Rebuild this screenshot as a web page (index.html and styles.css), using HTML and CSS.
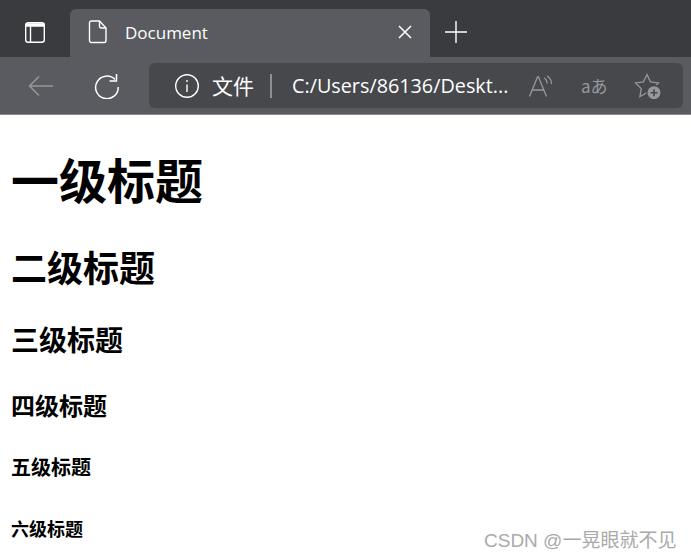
FILE: index.html
```html
<!DOCTYPE html>
<html lang="zh">
<head>
<meta charset="utf-8">
<title>Document</title>
<link rel="stylesheet" href="styles.css">
</head>
<body>
<header class="browser">
  <div class="tabstrip">
    <div class="tab-actions">
      <svg class="icon" width="24" height="24" viewBox="0 0 24 24" fill="none" stroke="#fff" stroke-width="1.400"><rect x="2.700" y="1.700" width="18.600" height="19.600" rx="2.500"/><path d="M2.500 4h19" stroke-width="3.500"/><path d="M7.500 5v16"/></svg>
    </div>
    <div class="tab">
      <svg class="icon" width="20" height="24" viewBox="0 0 20 24" fill="none" stroke="#fff" stroke-width="1.400"><path d="M3.500 1h8l6.500 7v12.500a2 2 0 0 1-2 2H3.500a2 2 0 0 1-2-2V3a2 2 0 0 1 2-2z"/><path d="M11.500 1v5a2 2 0 0 0 2 2H18"/></svg>
      <span class="tab-title">Document</span>
      <svg class="tab-close" width="14" height="14" viewBox="0 0 14 14" stroke="#fff" stroke-width="1.500"><path d="M1 1l12 12M13 1L1 13"/></svg>
    </div>
    <svg class="new-tab" width="22" height="22" viewBox="0 0 22 22" stroke="#fff" stroke-width="1.400"><path d="M11 0v22M0 11h22"/></svg>
  </div>
  <div class="toolbar">
    <svg class="back" width="26" height="22" viewBox="0 0 26 22" fill="none" stroke="#97989b" stroke-width="1.500"><path d="M25 11H1.500M11 1.500L1.500 11l9.500 9.500"/></svg>
    <svg class="reload" width="26" height="26" viewBox="0 0 26 26" fill="none" stroke="#fff" stroke-width="1.500"><path d="M21 6.500A11.300 11.300 0 1 0 24.200 14"/><path d="M22.500 1v7H15.500"/></svg>
    <div class="address">
      <svg class="info" width="26" height="26" viewBox="0 0 26 26" fill="none" stroke="#fff" stroke-width="1.400"><circle cx="13" cy="13" r="11.300"/><path d="M13 11.500v7.500M13 7v2"/></svg>
      <span class="scheme">文件</span>
      <span class="divider"></span>
      <span class="url">C:/Users/86136/Deskt...</span>
      <svg class="act act-read" width="26" height="26" viewBox="0 0 26 26" fill="none" stroke="#97989b" stroke-width="1.300"><path d="M1.500 23.500L9.500 4h1l8 19.500M4.500 17h11"/><path d="M16 5c2 1 3 3 3 5.500M19 3c2.500 1.500 4.500 4.500 4.500 8"/></svg>
      <span class="act act-trans">aあ</span>
      <svg class="act act-fav" width="28" height="26" viewBox="0 0 28 26" fill="none" stroke="#97989b" stroke-width="1.300"><path d="M13 1.500l3.500 7.300 8 1.100-5.800 5.700 1.400 8-7.100-3.800-7.100 3.800 1.400-8L1.500 9.900l8-1.100z"/><circle cx="20" cy="19.700" r="7.200" fill="#97989b" stroke="#47484c" stroke-width="1.400"/><path d="M20 16.200v7M16.500 19.700h7" stroke="#47484c" stroke-width="1.600"/></svg>
    </div>
  </div>
</header>
<main class="page">
  <h1>一级标题</h1>
  <h2>二级标题</h2>
  <h3>三级标题</h3>
  <h4>四级标题</h4>
  <h5>五级标题</h5>
  <h6>六级标题</h6>
</main>
<div class="watermark">CSDN @一晃眼就不见</div>
</body>
</html>
```
FILE: styles.css
```css
* { box-sizing: border-box; }
html, body { margin: 0; padding: 0; height: 560px; overflow: hidden; background: #fff; }
body { position: relative; font-family: "Noto Sans CJK SC", "Noto Sans", sans-serif; }

.browser { height: 115px; background: #5a5b60; border-bottom: 1px solid #8c8d90; }
.tabstrip { height: 57px; background: #3a3b3f; display: flex; align-items: flex-end; }
.tab-actions { width: 70px; height: 48px; background: #3a3b3f; display: flex; align-items: center; justify-content: center; border-bottom-right-radius: 6px; }
.tab { width: 360px; height: 48px; background: #5a5b60; border-radius: 6px 6px 0 0; display: flex; align-items: center; padding: 0 18px 2px 18px; color: #fff; }
.tab-title { font-family: "Open Sans", "Noto Sans", sans-serif; font-size: 17px; margin-left: 17px; flex: 1; }
.new-tab { margin: 0 0 14px 15px; }

.toolbar { height: 57px; display: flex; align-items: center; padding: 0 8px 0 28px; }
.reload { margin-left: 40px; }
.address { margin-left: 29px; flex: 1; height: 45px; background: #47484c; border-radius: 6px; display: flex; align-items: center; padding-left: 25px; color: #fff; }
.scheme { font-size: 21px; margin-left: 12px; line-height: 1; }
.divider { width: 2px; height: 24px; background: #8e8f92; margin: 0 20px 0 16px; }
.url { font-family: "Open Sans", "Noto Sans", sans-serif; font-size: 19.800px; width: 218px; white-space: nowrap; }
.act { color: #97989b; flex: none; }
.act-read { margin-left: 18px; }
.act-trans { font-size: 17px; width: 26px; margin-left: 27px; line-height: 1; white-space: nowrap; }
.act-fav { margin-left: 27px; }

.page { padding: 0 11px; color: #000; }
h1, h2, h3, h4, h5, h6 { margin: 0; font-weight: 700; line-height: 1.200; }
h1 { font-size: 48px; margin-top: 35px; }
h2 { font-size: 36px; margin-top: 37px; }
h3 { font-size: 28px; margin-top: 35px; }
h4 { font-size: 24px; margin-top: 35px; }
h5 { font-size: 20px; margin-top: 35px; }
h6 { font-size: 18px; margin-top: 39px; }

.watermark { position: absolute; left: 484px; top: 528px; font-family: "Liberation Sans", "Noto Sans CJK SC", sans-serif; font-size: 19px; line-height: 26px; color: #aaa; white-space: nowrap; }
```
